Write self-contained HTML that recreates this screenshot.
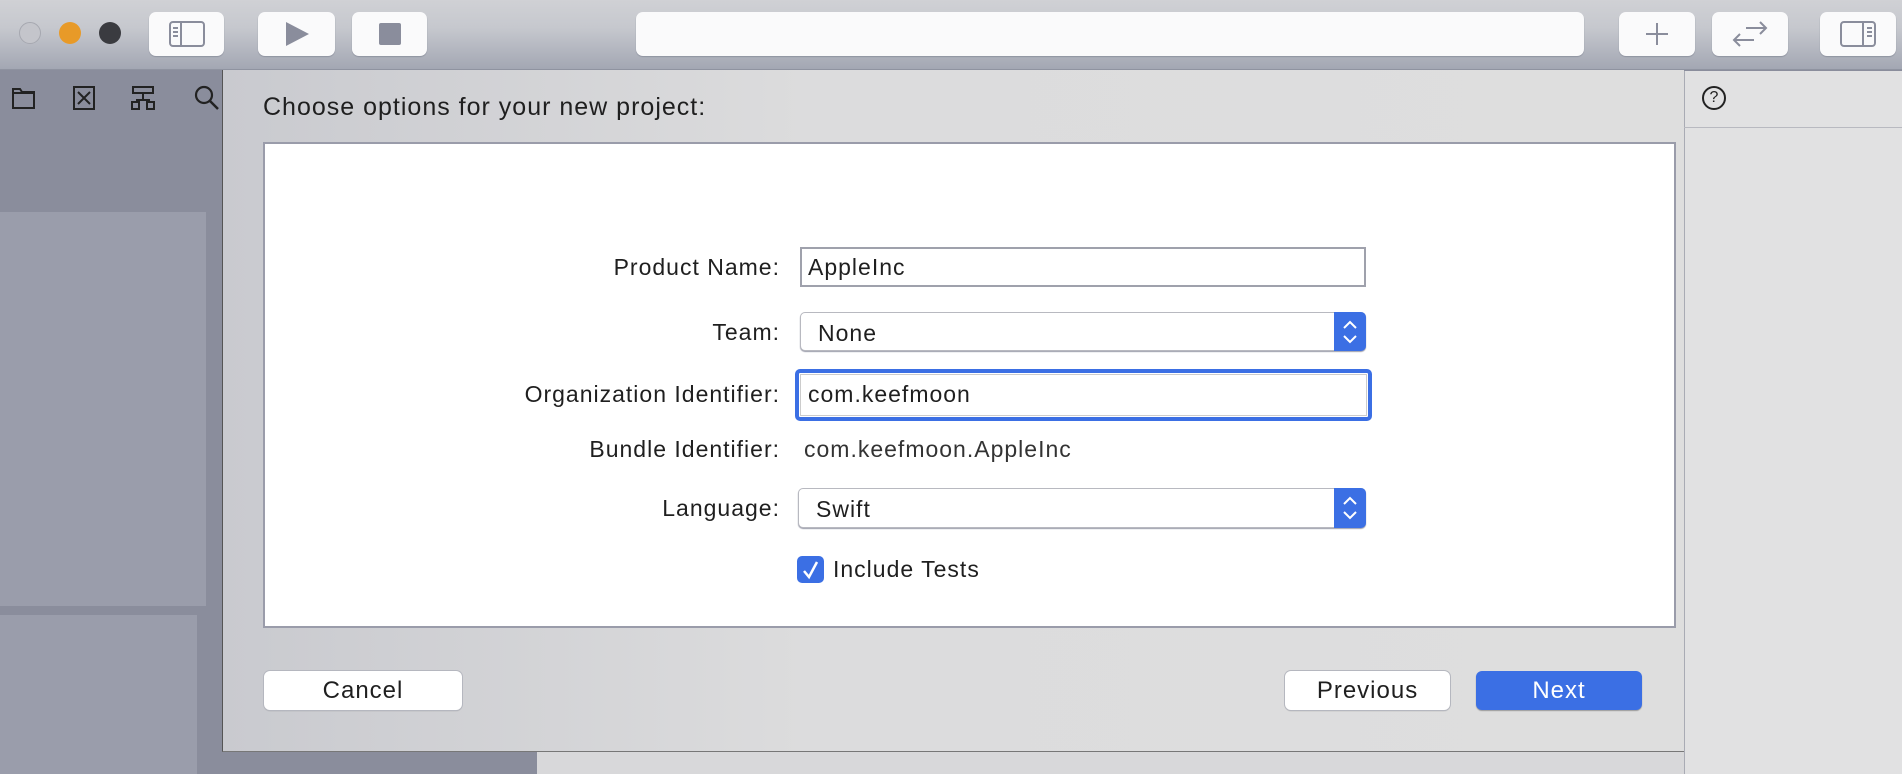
<!DOCTYPE html>
<html><head><meta charset="utf-8"><style>
*{margin:0;padding:0;box-sizing:border-box}
body{width:1902px;height:774px;overflow:hidden;position:relative;background:#8a8d9c;font-family:"Liberation Sans",sans-serif;color:#1f1f1f}
.a{position:absolute}
.tb{left:0;top:0;width:1902px;height:70px;background:linear-gradient(#d0d1d5,#c6c8ce 40%,#a3a7b3);border-bottom:1px solid #8f93a0}
.btn{position:absolute;top:12px;height:44px;background:#fafafb;border-radius:7px;box-shadow:0 1px 1px #8f93a0}
.tl{position:absolute;top:22px;width:22px;height:22px;border-radius:50%}
.lbl{position:absolute;right:1122px;font-size:23px;letter-spacing:1px;white-space:nowrap;text-align:right}
.txt{font-size:23px;letter-spacing:1px;white-space:nowrap}
.pop{position:absolute;background:#fff;border:1px solid #b8b9c0;border-radius:5px;box-shadow:0 1px 1px #9a9caa}
.step{position:absolute;right:-1px;top:-1px;bottom:-1px;width:32px;background:#3b6fe4;border-radius:0 5px 5px 0}
.pb{position:absolute;top:671px;height:39px;background:#fff;border-radius:6px;box-shadow:0 0 0 1px #b5b7bf,0 1px 1px #999;font-size:24px;letter-spacing:1px;text-align:center;line-height:39px}
</style></head><body>
<div class="a tb"></div>
<div class="tl" style="left:19px;background:#c4c5cb;border:1px solid #a6a8b0"></div>
<div class="tl" style="left:59px;background:#e89a28"></div>
<div class="tl" style="left:99px;background:#3a3b40"></div>
<div class="btn" style="left:149px;width:75px"><svg class="a" style="left:20px;top:9px" width="36" height="26"><rect x="1" y="1" width="34" height="24" rx="3" fill="none" stroke="#8a8d9c" stroke-width="2"/><line x1="12" y1="1" x2="12" y2="25" stroke="#8a8d9c" stroke-width="2"/><path d="M4 7h5M4 11h5M4 15h5" stroke="#8a8d9c" stroke-width="2"/></svg></div>
<div class="btn" style="left:258px;width:77px"><svg class="a" style="left:25px;top:8px" width="28" height="28"><path d="M3 2L26 14L3 26Z" fill="#8a8d9c"/></svg></div>
<div class="btn" style="left:352px;width:75px"><div class="a" style="left:27px;top:11px;width:22px;height:22px;background:#8a8d9c;border-radius:2px"></div></div>
<div class="btn" style="left:636px;width:948px"></div>
<div class="btn" style="left:1619px;width:76px"><svg class="a" style="left:26px;top:10px" width="24" height="24"><path d="M12 1v22M1 12h22" stroke="#8a8d9c" stroke-width="2"/></svg></div>
<div class="btn" style="left:1712px;width:76px"><svg class="a" style="left:18px;top:8px" width="40" height="28"><path d="M16 8h20M30 2l6 6-6 6M24 20H4M10 14l-6 6 6 6" fill="none" stroke="#8a8d9c" stroke-width="2"/></svg></div>
<div class="btn" style="left:1820px;width:76px"><svg class="a" style="left:20px;top:9px" width="36" height="26"><rect x="1" y="1" width="34" height="24" rx="3" fill="none" stroke="#8a8d9c" stroke-width="2"/><line x1="23" y1="1" x2="23" y2="25" stroke="#8a8d9c" stroke-width="2"/><path d="M27 7h5M27 11h5M27 15h5" stroke="#8a8d9c" stroke-width="2"/></svg></div>

<!-- left sidebar -->
<svg class="a" style="left:10px;top:84px" width="212" height="30"><path d="M3 5h7l2 3h12v16H3Z M3 9h21" fill="none" stroke="#222" stroke-width="2"/><rect x="64" y="3" width="20" height="22" fill="none" stroke="#222" stroke-width="2"/><path d="M68 8l12 12M80 8l-12 12" stroke="#222" stroke-width="2"/><path d="M123 3h20v6h-20z M133 9v7 M126 16h14 M122 18h7v7h-7z M137 18h7v7h-7z" fill="none" stroke="#222" stroke-width="2"/><circle cx="194" cy="11" r="8" fill="none" stroke="#222" stroke-width="2.2"/><path d="M200 17l8 8" stroke="#222" stroke-width="2.5"/></svg>
<div class="a" style="left:0;top:212px;width:206px;height:394px;background:#9a9dab"></div>
<div class="a" style="left:0;top:615px;width:197px;height:159px;background:#9a9dab"></div>

<!-- right panel -->
<div class="a" style="left:1684px;top:71px;width:218px;height:703px;background:#e1e1e2;border-left:1px solid #a9abb4"></div>
<div class="a" style="left:1684px;top:127px;width:218px;height:1px;background:#b8b9c0"></div>
<div class="a" style="left:1702px;top:86px;width:24px;height:24px;border:2px solid #222;border-radius:50%;font-size:16px;text-align:center;line-height:20px">?</div>

<!-- below sheet -->
<div class="a" style="left:537px;top:752px;width:1147px;height:22px;background:#d8d8da"></div>

<!-- sheet -->
<div class="a" style="left:222px;top:70px;width:1462px;height:682px;background:linear-gradient(90deg,#c9cacf,#dcdcdd 40%,#dedede);border-left:1px solid #555;border-bottom:1px solid #777"></div>
<div class="a txt" style="left:263px;top:93px;font-size:25px;letter-spacing:1px">Choose options for your new project:</div>
<div class="a" style="left:263px;top:142px;width:1413px;height:486px;background:#fff;border:2px solid #9a9caa"></div>

<div class="lbl" style="top:254px">Product Name:</div>
<div class="a" style="left:800px;top:247px;width:566px;height:40px;background:#fff;border:2px solid #9fa1ac"></div>
<div class="a txt" style="left:808px;top:254px">AppleInc</div>

<div class="lbl" style="top:319px">Team:</div>
<div class="pop" style="left:800px;top:312px;width:566px;height:39px"><div class="a txt" style="left:17px;top:7px">None</div><div class="step"><svg class="a" style="left:8px;top:7px" width="16" height="26"><path d="M2 9l6-6 6 6M2 17l6 6 6-6" fill="none" stroke="#fff" stroke-width="2"/></svg></div></div>

<div class="lbl" style="top:381px">Organization Identifier:</div>
<div class="a" style="left:795px;top:369px;width:577px;height:52px;border:4px solid #3b6fe4;border-radius:5px"></div>
<div class="a" style="left:800px;top:374px;width:567px;height:42px;background:#fff;border:1px solid #ccc"></div>
<div class="a txt" style="left:808px;top:381px">com.keefmoon</div>

<div class="lbl" style="top:436px">Bundle Identifier:</div>
<div class="a txt" style="left:804px;top:436px;color:#333">com.keefmoon.AppleInc</div>

<div class="lbl" style="top:495px">Language:</div>
<div class="pop" style="left:798px;top:488px;width:568px;height:40px"><div class="a txt" style="left:17px;top:7px">Swift</div><div class="step"><svg class="a" style="left:8px;top:7px" width="16" height="26"><path d="M2 9l6-6 6 6M2 17l6 6 6-6" fill="none" stroke="#fff" stroke-width="2"/></svg></div></div>

<div class="a" style="left:797px;top:556px;width:27px;height:27px;background:#3b6fe4;border-radius:5px"><svg class="a" style="left:5px;top:4px" width="18" height="20"><path d="M2 11l5 6L15 2" fill="none" stroke="#fff" stroke-width="2.5"/></svg></div>
<div class="a txt" style="left:833px;top:556px">Include Tests</div>

<div class="pb" style="left:264px;width:198px">Cancel</div>
<div class="pb" style="left:1285px;width:165px">Previous</div>
<div class="pb" style="left:1476px;width:166px;background:#3b6fe4;color:#fff;box-shadow:0 1px 1px #999">Next</div>
</body></html>
